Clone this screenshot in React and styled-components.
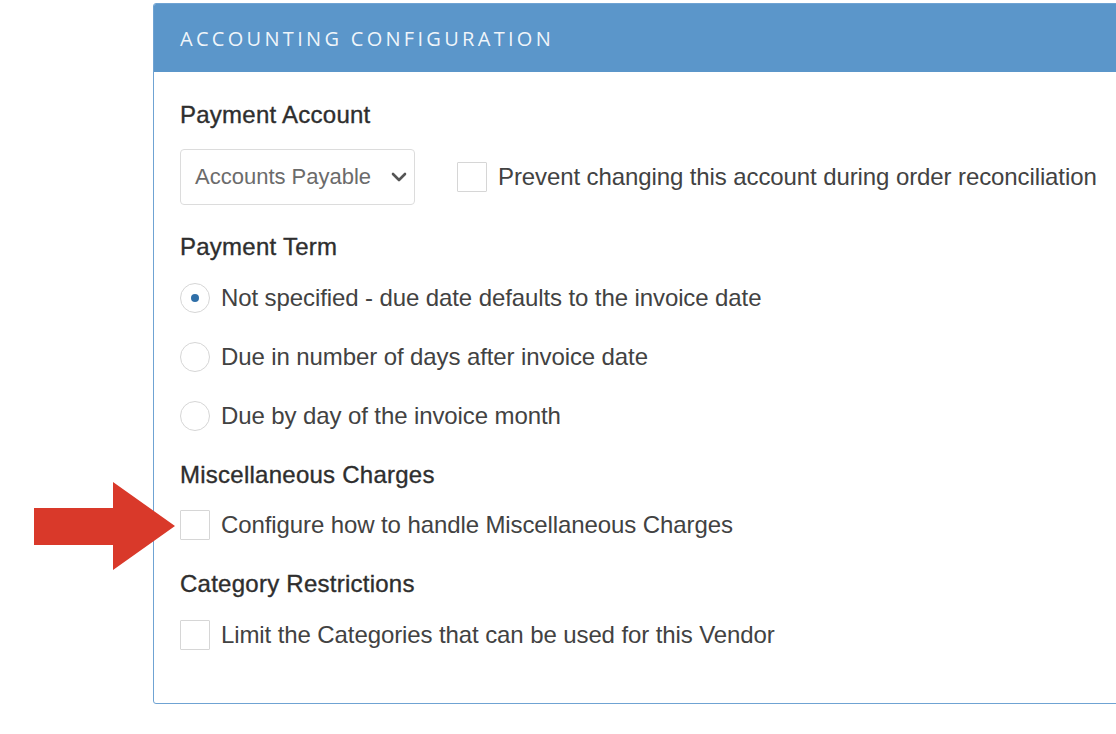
import React from "react";
import styled, { createGlobalStyle } from "styled-components";

const GlobalStyle = createGlobalStyle`
  html, body {
    margin: 0;
    padding: 0;
    background: #fff;
    overflow: hidden;
  }
  body {
    font-family: "Liberation Sans", Arial, sans-serif;
    color: #333;
  }
`;

const Page = styled.div`
  position: relative;
  width: 1116px;
  height: 734px;
  padding: 3px 0 0 153px;
  box-sizing: border-box;
`;

const Panel = styled.section`
  width: 1000px;
  border: 1px solid #6fa3d3;
  border-radius: 3px;
  overflow: hidden;
  box-sizing: border-box;
`;

const PanelHeader = styled.header`
  height: 68px;
  background: #5b96ca;
  display: flex;
  align-items: center;
  padding-left: 26px;
  color: rgba(255, 255, 255, 0.92);
  font-family: "Open Sans", "Liberation Sans", sans-serif;
  font-size: 20px;
  letter-spacing: 3.3px;
`;

const PanelBody = styled.div`
  padding: 31px 26px 53px;
  display: flex;
  flex-direction: column;
`;

const SectionLabel = styled.div`
  font-size: 24px;
  letter-spacing: 0.25px;
  color: #2e2e2e;
  -webkit-text-stroke: 0.35px #2e2e2e;
  line-height: 24px;
  margin-top: ${(p) => p.$top || 0}px;
`;

const Row = styled.label`
  display: flex;
  align-items: center;
  gap: 11px;
  height: 30px;
  margin-top: ${(p) => p.$top || 0}px;
  font-size: 24px;
  letter-spacing: -0.1px;
  color: #424242;
  white-space: nowrap;
`;

const InlineRow = styled.div`
  display: flex;
  align-items: center;
  gap: 42px;
  margin-top: 22px;
`;

const Select = styled.div`
  width: 235px;
  height: 56px;
  box-sizing: border-box;
  border: 1px solid #dcdcdc;
  border-radius: 4px;
  display: flex;
  align-items: center;
  justify-content: space-between;
  padding: 0 6px 0 14px;
  font-size: 22px;
  color: #6b6b6b;
  flex: none;
`;

const Box = styled.span`
  width: 30px;
  height: 30px;
  box-sizing: border-box;
  border: 1px solid #d6d6d6;
  border-radius: 1px;
  background: #fff;
  flex: none;
`;

const Radio = styled.span`
  width: 30px;
  height: 30px;
  box-sizing: border-box;
  border: 1px solid #d6d6d6;
  border-radius: 50%;
  flex: none;
  display: flex;
  align-items: center;
  justify-content: center;
  &::after {
    content: "";
    width: 8px;
    height: 8px;
    border-radius: 50%;
    background: ${(p) => (p.$checked ? "#2f6fa8" : "transparent")};
  }
`;

const Arrow = styled.svg`
  position: absolute;
  left: 34px;
  top: 482px;
`;

const Chevron = () => (
  <svg width="18" height="12" viewBox="0 0 18 12">
    <path d="M3 3 L9 9 L15 3" fill="none" stroke="#555" strokeWidth="2.6" strokeLinecap="round" strokeLinejoin="round" />
  </svg>
);

const terms = [
  { label: "Not specified - due date defaults to the invoice date", checked: true },
  { label: "Due in number of days after invoice date" },
  { label: "Due by day of the invoice month" },
];

export default function App() {
  return (
    <Page>
      <GlobalStyle />
      <Panel>
        <PanelHeader>ACCOUNTING CONFIGURATION</PanelHeader>
        <PanelBody>
          <SectionLabel>Payment Account</SectionLabel>
          <InlineRow>
            <Select>
              Accounts Payable
              <Chevron />
            </Select>
            <Row>
              <Box />
              Prevent changing this account during order reconciliation
            </Row>
          </InlineRow>
          <SectionLabel $top={30}>Payment Term</SectionLabel>
          {terms.map((t, i) => (
            <Row key={t.label} $top={i === 0 ? 24 : 29}>
              <Radio $checked={t.checked} />
              {t.label}
            </Row>
          ))}
          <SectionLabel $top={32}>Miscellaneous Charges</SectionLabel>
          <Row $top={23}>
            <Box />
            Configure how to handle Miscellaneous Charges
          </Row>
          <SectionLabel $top={32}>Category Restrictions</SectionLabel>
          <Row $top={24}>
            <Box />
            Limit the Categories that can be used for this Vendor
          </Row>
        </PanelBody>
      </Panel>
      <Arrow width="142" height="90" viewBox="0 0 142 90">
        <polygon points="0,26 79,26 79,0 141,44 79,88 79,63 0,63" fill="#d9392a" />
      </Arrow>
    </Page>
  );
}
